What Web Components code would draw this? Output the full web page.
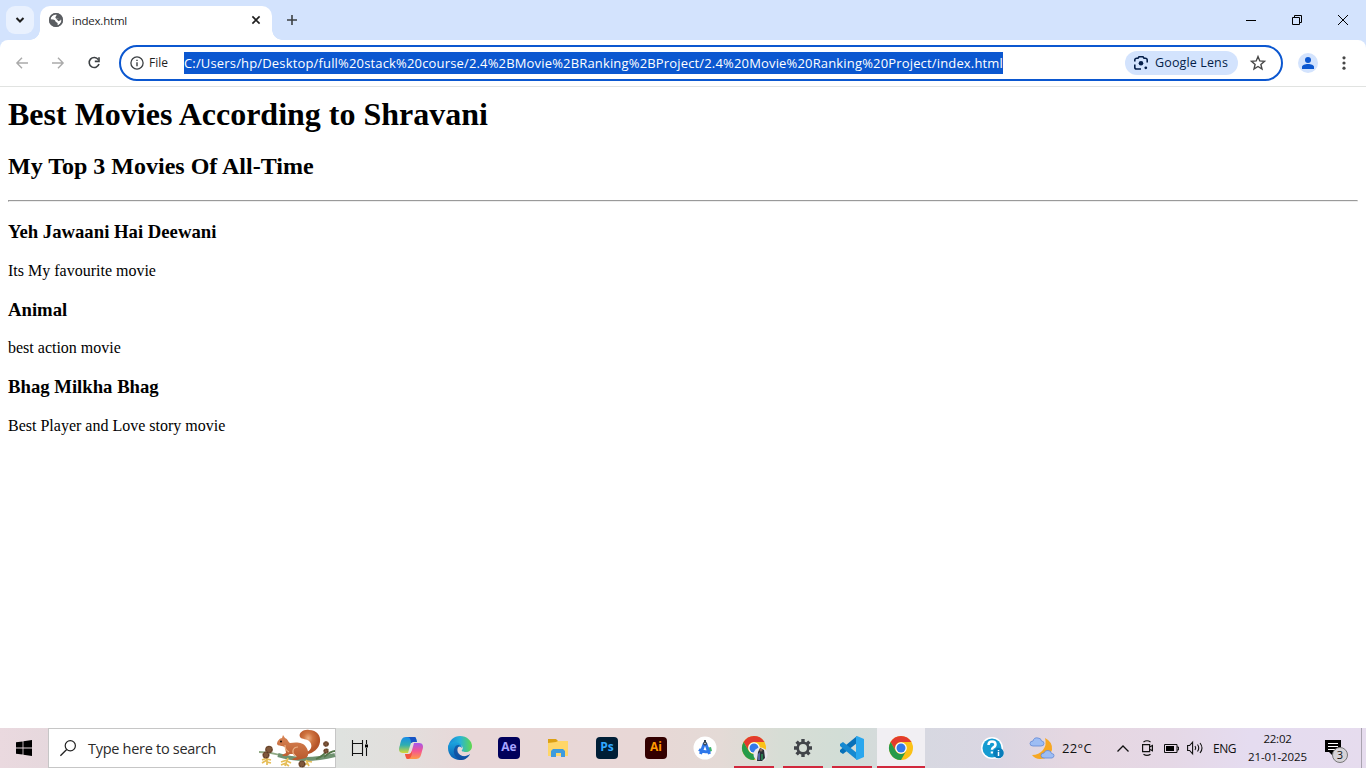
<!DOCTYPE html>
<html lang="en"><head><meta charset="utf-8"><title>index.html</title>
<style>html,body{margin:0;height:100%;overflow:hidden;background:#fff}</style></head>
<body><desktop-screen></desktop-screen>
<script>
const define=(name,css,html)=>customElements.define(name,class extends HTMLElement{
  constructor(){super();this.attachShadow({mode:'open'}).innerHTML=`<style>*{box-sizing:border-box}svg{display:block;flex:none;overflow:visible}${css}</style>${html}`}
});

// Label whose tracking adapts to the width it is given
customElements.define('ui-label',class extends HTMLElement{
  constructor(){super();this.attachShadow({mode:'open'}).innerHTML=`<style>:host{display:block;flex:none;white-space:pre}span{display:inline-block}</style><span><slot></slot></span>`}
  connectedCallback(){
    const w=+this.getAttribute('w'),s=this.shadowRoot.querySelector('span');
    this.style.width=w+'px';
    const n=this.textContent.length,r=s.getBoundingClientRect().width;
    if(r)s.style.letterSpacing=((w-r)/n)+'px';
  }
});

define('tab-strip',`
:host{display:flex;height:40px;background:#d3e3fd;padding-left:6px;font:12px/16px "Open Sans",sans-serif;color:#1f1f1f}
.find{width:28px;height:28px;margin-top:6px;border-radius:9px;background:#e9f1fe;display:grid;place-items:center}
.tab{position:relative;width:232px;height:34px;margin:6px 0 0 6px;background:#fff;border-radius:10px 10px 0 0;display:flex;align-items:center;padding:0 9px 6px 8px}
.tab:before,.tab:after{content:"";position:absolute;bottom:0;width:10px;height:10px}
.tab:before{left:-10px;background:radial-gradient(circle at 0 0,transparent 9.5px,#fff 10px)}
.tab:after{right:-10px;background:radial-gradient(circle at 100% 0,transparent 9.5px,#fff 10px)}
.tab ui-label{margin-left:8px;margin-right:auto;font-size:11.5px;margin-top:1px}
.plus{width:40px;display:grid;place-items:center}
.win{margin-left:auto;display:flex}.win div{width:46px;display:grid;place-items:center}`,
`<div class="find"><svg width="10" height="8" viewBox="0 0 10 8"><path d="M1.5 2L5 5.5 8.5 2" fill="none" stroke="#1f1f1f" stroke-width="2"/></svg></div>
<div class="tab"><svg width="16" height="16" viewBox="0 0 16 16"><circle cx="8" cy="8" r="7" fill="#5b5e62"/><path d="M8.700 2.200C8.800 4 7.500 4.200 7.400 5.600 7.300 6.600 8.600 7 9.600 6.600c1.200-.4 1.300 1 2.600 1.100 1 .1 1.300-.4 1.400.6-.3 2.300-1.600 4.200-3.800 5.200-.5-1 .2-1.700-.3-2.600-.5-.8-1.900-.5-2.100-1.600-.2-1-1.200-1.600-2.300-1.700L2.400 7.300C2.700 4.500 5 2 8.700 2.200z" fill="#fff"/><path d="M8 6.500h3l2 1.500-2.500 1.200z" fill="#5b5e62"/><circle cx="8" cy="8" r="6.300" fill="none" stroke="#5b5e62" stroke-width="1.500"/></svg><ui-label w="55">index.html</ui-label>
<svg width="14" height="14" viewBox="0 0 14 14"><path d="M3.4 3.4l7.2 7.2m0-7.2l-7.2 7.2" stroke="#1f1f1f" stroke-width="1.6"/></svg></div>
<div class="plus"><svg width="12" height="12"><path d="M6 1v10M1 6h10" stroke="#3c4043" stroke-width="1.6"/></svg></div>
<div class="win"><div><svg width="10" height="10"><path d="M0 5.5h10" stroke="#000"/></svg></div><div><svg width="10" height="10"><path d="M.5 2.5h7v7h-7zM2.5 2.5v-2h7v7h-2" fill="none" stroke="#000"/></svg></div><div><svg width="10" height="10"><path d="M0 0l10 10m0-10L0 10" stroke="#000"/></svg></div></div>`);

define('address-bar',`
:host{display:flex;align-items:center;height:47px;border-bottom:1px solid #e1e3e1;background:linear-gradient(#d3e3fd,#d3e3fd) 0 0/100% 10px no-repeat;font:12.5px/22px "Open Sans",sans-serif}
.back{flex:1;display:flex;align-items:center;height:46px;background:#fff;border-radius:8px 8px 0 0}
.nav{width:36px;display:grid;place-items:center}.nav:first-child{margin-left:4px}
.box{margin-left:7px;width:1164px;height:36px;border:2px solid #0b57d0;border-radius:18px;display:flex;align-items:center;padding:0 15px 0 9px;color:#1f1f1f}
.file{margin-left:5px;font-size:12px}
.url{margin-left:16px;background:#0b57d0;color:#fff;height:22px;font-size:13px;line-height:22px}
.chip{margin-left:auto;width:113px;height:24px;border-radius:12px;background:#d3e3fd;color:#041e49;display:flex;align-items:center;padding-left:8px}
.chip ui-label{margin-left:6px}.star{margin-left:12px}
.me{margin-left:15px;width:20px;height:20px;border-radius:50%;background:#d3e3fd;display:grid;place-items:center}
.dots{margin-left:24px}`,
`<div class="back"><div class="nav"><svg width="12" height="12"><path d="M12 6H1M6 .8L.9 6 6 11.2" fill="none" stroke="#aaa" stroke-width="1.4"/></svg></div>
<div class="nav"><svg width="12" height="12"><path d="M0 6h11M6 .8L11.1 6 6 11.2" fill="none" stroke="#aaa" stroke-width="1.4"/></svg></div>
<div class="nav"><svg width="14" height="14"><path d="M11.3 3.6A5 5 0 1 0 12 8" fill="none" stroke="#3c4043" stroke-width="1.6"/><path d="M12 1.200v4.200H7.800" fill="none" stroke="#3c4043" stroke-width="1.6"/></svg></div>
<div class="box"><svg width="14" height="14"><circle cx="7" cy="7" r="6.1" fill="none" stroke="#3c4043" stroke-width="1.3"/><path d="M7 6.2v4M7 3.7v1.4" stroke="#3c4043" stroke-width="1.4"/></svg>
<ui-label class="file" w="19">File</ui-label><ui-label class="url" w="819">C:/Users/hp/Desktop/full%20stack%20course/2.4%2BMovie%2BRanking%2BProject/2.4%20Movie%20Ranking%20Project/index.html</ui-label>
<div class="chip"><svg width="16" height="16"><path d="M1.800 6.500V5A1.800 1.800 0 0 1 3.600 3.200H5l1-1.400h4l1 1.400h1.400A1.800 1.800 0 0 1 14.200 5V7.500M1.800 9.500v2.700A1.800 1.800 0 0 0 3.600 14H8" fill="none" stroke="#041e49" stroke-width="1.6"/><circle cx="8" cy="8.300" r="2.300" fill="#041e49"/><circle cx="12.800" cy="12.800" r="1.400" fill="#041e49"/></svg><ui-label w="73">Google Lens</ui-label></div>
<svg class="star" width="16" height="16" viewBox="0 0 16 16"><path d="M8 1.6l1.8 4.3 4.7.4-3.6 3.1 1.1 4.6L8 11.5 4 14l1.1-4.6-3.6-3.1 4.7-.4z" fill="none" stroke="#474747" stroke-width="1.4"/></svg></div>
<div class="me"><svg width="12" height="12"><circle cx="6" cy="3" r="3" fill="#0b57d0"/><path d="M0 12v-2c0-2 3-3 6-3s6 1 6 3v2z" fill="#0b57d0"/></svg></div>
<svg class="dots" width="4" height="16"><circle cx="2" cy="2.8" r="1.600" fill="#474747"/><circle cx="2" cy="8" r="1.600" fill="#474747"/><circle cx="2" cy="13.2" r="1.600" fill="#474747"/></svg></div>`);

define('movie-entry',`:host{display:block}h3{font-size:18.72px;line-height:22px;margin:18.72px 0}p{font-size:16px;line-height:18px;margin:0}`,
`<h3><ui-label w="0"></ui-label><slot name="title"></slot></h3><p><slot></slot></p>`.replace('<ui-label w="0"></ui-label>',''));
define('movie-page',`:host{display:block;flex:1;padding:9px 8px 0;font-family:"Liberation Serif",serif;color:#000}
h1{font-size:32px;line-height:37px;margin:0 0 20.44px}h2{font-size:24px;line-height:27px;margin:0 0 19.92px}hr{margin:0;border:1px inset;color:gray}`,
`<h1>Best Movies According to Shravani</h1><h2>My Top 3 Movies Of All-Time</h2><hr>
<movie-entry><span slot="title">Yeh Jawaani Hai Deewani</span>Its My favourite movie</movie-entry>
<movie-entry><span slot="title">Animal</span>best action movie</movie-entry>
<movie-entry><span slot="title">Bhag Milkha Bhag</span>Best Player and Love story movie</movie-entry>`);

define('task-button',`:host{position:relative;display:grid;place-items:center;width:48px;height:40px;margin-right:1px;flex:none}
:host([running])::after{content:"";position:absolute;left:4px;right:4px;bottom:0;height:2px;background:#d1283d}
:host([active]){background:#f1eff3;margin-right:0}:host([active])::after{left:0;right:0}`,`<slot></slot>`);

const chrome=`<circle cx="12" cy="12" r="12" fill="#fbc116"/><path d="M1.6 6A12 12 0 0 1 22.4 6H12a6 6 0 0 0-5.2 9z" fill="#e33b2e"/><path d="M1.6 6A12 12 0 0 0 12 24l5.2-9A6 6 0 0 1 6.8 15z" fill="#269b4a"/><circle cx="12" cy="12" r="5.8" fill="#fff"/><circle cx="12" cy="12" r="4.5" fill="#3479e8"/>`;
const adobe=(t,bg,fg)=>`<div class="adobe" style="background:${bg};color:${fg}">${t}</div>`;

define('task-bar',`
:host{display:flex;height:40px;flex:none;font-family:"Open Sans",sans-serif;color:#111;
background:linear-gradient(90deg,#ead9df 0,#e6d8dd 48px,#dfe2df 340px,#e2dfdd 400px,#e8d7d8 470px,#e8d7d6 640px,#e4dad6 720px,#d7ddd5 780px,#d2ddd6 840px,#d7d8e1 925px,#dad6e2 990px,#e6d7e1 1080px,#e5d8e6 1170px,#e5dcf0 1250px,#e6dcee 1366px)}
.start{width:48px;display:grid;place-items:center}
.search{width:288px;background:#fff;border:1px solid #c6c6c6;display:flex;align-items:center;padding-left:11px;font-size:14.5px;color:#2b2b2b}
.search ui-label{margin-left:12px;margin-right:auto}
.view{width:51px;padding-right:3px;display:grid;place-items:center}
.adobe{width:22px;height:22px;border-radius:4px;font:bold 12px/20px "Open Sans",sans-serif;text-align:center}
.tray{margin-left:auto;display:flex;align-items:center;font-size:12px}
.clock{width:82px;display:grid;justify-items:center;font-size:11.5px;line-height:18px}
.note{position:relative;width:28px}.note b{position:absolute;left:7px;top:7px;width:16px;height:16px;border:1px solid #777;border-radius:50%;background:#d6d3d8;font:11px/14px "Open Sans",sans-serif;text-align:center}
.edge{width:5px;height:40px;border-left:1px solid #a9a3af}`,
`<div class="start"><svg width="16" height="16"><path d="M0 2.3L6.6 1.4v6.1H0zM7.4 1.2L16 0v7.5H7.4zM0 8.4h6.6v6.2L0 13.7zM7.4 8.4H16V16l-8.6-1.2z"/></svg></div>
<div class="search"><svg width="16" height="16"><circle cx="10.3" cy="5.7" r="5.1" fill="none" stroke="#222" stroke-width="1.2"/><path d="M6.7 9.5L.4 15.8" stroke="#222" stroke-width="1.3"/></svg><ui-label w="128">Type here to search</ui-label>
<svg width="77" height="38" viewBox="0 0 77 38"><defs><linearGradient id="s" x2="0" y2="1"><stop stop-color="#d98656"/><stop offset="1" stop-color="#b8592c"/></linearGradient><radialGradient id="t" cx=".42" cy=".35"><stop stop-color="#edb186"/><stop offset=".45" stop-color="#cf7440"/><stop offset="1" stop-color="#b65529"/></radialGradient></defs>
<path d="M1 23Q12 23 22 26" fill="none" stroke="#91aa85" stroke-width="1.800"/>
<path d="M20 26Q46 34 77 26" fill="none" stroke="#6f9270" stroke-width="4"/><path d="M58 30Q66 27 70 20M66 28Q73 22 77 22" fill="none" stroke="#55774a" stroke-width="1.800"/>
<path d="M9 28v8m0-7l-5 2m5 0l-5 3m5-4l4 1m-4 2l4 1M30 29l-3 8m2-6l-6 2m5 1l-5 2m6-4l4 2m-5 1l3 2M48 31l3 6m-1-3l-4 2m3-4l5 1" fill="none" stroke="#e5bd57" stroke-width="1.700"/>
<path d="M47 24c6-2 8-7 5-11-3-4-8-2-10-5-2-4 4-8 9-7 8 0 12 6 11 12-1 7-7 11-12 12z" fill="url(#t)"/>
<path d="M19 15c0-3 3-6 5-6l1-3 2 3c3 1 3 4 5 5 6-1 13-1 16 4 3 4 3 9 0 11l-9 2H35l-1-1 5-2-3-3-4 0-3 2h-4l-1-1 4-2-1-6-3-1c-2 0-5-1-5-2z" fill="url(#s)"/><path d="M40 18c-5 0-7 5-3 9M27 16c0 4 1 5 4 7" stroke="#eab083" stroke-width="1.200" fill="none"/><circle cx="23" cy="12.500" r=".9"/>
<g fill="#80583b"><circle cx="8" cy="26" r="3.500"/><circle cx="11" cy="20.500" r="3.800"/><circle cx="44" cy="35" r="3.500"/><circle cx="68" cy="15" r="2.800"/><circle cx="68" cy="22" r="2.600"/></g><g fill="none" stroke="#4b3120" stroke-width="1" stroke-dasharray="1.300 1.300"><circle cx="8" cy="26" r="2.700"/><circle cx="11" cy="20.500" r="3"/><circle cx="44" cy="35" r="2.700"/><circle cx="68" cy="15" r="2"/><circle cx="68" cy="22" r="1.800"/></g></svg></div>
<div class="view"><svg width="16" height="16"><path d="M.5 0v3.500h10V0M.5 16v-2.500h10V16M.5 3.500v10M10.500 3.500v10M14.500 0v4m0 4v8" fill="none" stroke="#111" stroke-width="1.100"/><path d="M13 4.500h3v3h-3z"/></svg></div>
<task-button><svg width="24" height="22" viewBox="0 0 24 22"><defs><linearGradient id="a" x2="0" y2="1"><stop stop-color="#188ce9"/><stop offset=".5" stop-color="#2faeb0"/><stop offset="1" stop-color="#d6d835"/></linearGradient><linearGradient id="b" x2="0" y2="1"><stop stop-color="#a457ed"/><stop offset=".5" stop-color="#f45691"/><stop offset="1" stop-color="#ff9b45"/></linearGradient></defs><path d="M7 0h8c2 0 2 1 3 5h-4c-2 0-2 1-3 4l-2 7H4c-4 0-5-3-3-8 1-5 2-8 6-8z" fill="url(#a)"/><path d="M8 0h7c2 0 2 1 3 5h-4l-2 1c0-3-1-6-4-6z" fill="#1754c5"/><path d="M17 22H9c-2 0-2-1-3-5h4c2 0 2-1 3-4l2-7h5c4 0 5 3 3 8-1 5-2 8-6 8z" fill="url(#b)"/><path d="M6 17h4c1 0 2-1 3-3 0 4-1 8-4 8-2 0-2-2-3-5z" fill="#f2543f"/></svg></task-button>
<task-button><svg width="24" height="24" viewBox="0 0 24 24"><defs><linearGradient id="c"><stop stop-color="#1686d8"/><stop offset=".5" stop-color="#28b3d8"/><stop offset="1" stop-color="#60d84c"/></linearGradient><linearGradient id="d" x2="0" y2="1"><stop stop-color="#1ba5df"/><stop offset="1" stop-color="#0b5bb0"/></linearGradient></defs><path d="M0 12C1 4 6 0 12 0c7 0 12 5 12 10 0 4-3 6-6 6-3 0-5-1-4-2 2-2 0-5-3-5-4-2-8-1-11 3z" fill="url(#c)"/><path d="M0 12c0-4 3-6 6-6 5 0 8 3 8 6-3-3-6 0-5 3 1 5 8 7 13 3-3 5-6 6-10 6C5 24 0 19 0 12z" fill="url(#d)"/><path d="M7 11c1-2 3-2 5-2-4 3-3 9 2 11 3 1 6 0 8-2-2 4-6 6-10 6-5-2-8-8-5-13z" fill="#134b9c" opacity=".75"/></svg></task-button>
<task-button>${adobe('Ae','#00005b','#a7a4ff')}</task-button>
<task-button><svg width="22" height="19"><path d="M1 0h8l2 2h10v6H1z" fill="#dca013"/><path d="M1 4l8-1 2-1h10v15H1z" fill="#ffd668"/><path d="M4 18v-6l2-2h10l2 2v6h-4v-4H9v4z" fill="#3e9bdd"/></svg></task-button>
<task-button>${adobe('Ps','#001e36','#31a8ff')}</task-button><task-button>${adobe('Ai','#330000','#ff9a00')}</task-button>
<task-button><svg width="22" height="22"><circle cx="11" cy="11" r="11.500" fill="#fff"/><path d="M12 11l5-1 1 4-4 1z" fill="#3cb56a"/><path d="M10.300 6.500L6.500 17M11.700 6.500L15.500 17M5 12.500q6 4 11 1" fill="none" stroke="#2f78ea" stroke-width="3"/><circle cx="11" cy="6.500" r="2" fill="#345"/><circle cx="11" cy="6.500" r=".7" fill="#fff"/><path d="M11 3v2" stroke="#345" stroke-width="2"/></svg></task-button>
<task-button running><svg width="24" height="24">${chrome}<circle cx="18.5" cy="18.5" r="7" fill="#e8e6ed"/><path d="M15 25l1-9 2-4 4 2 1 8-3 3z" fill="#292f36"/><path d="M16 18l2-2v8h-2z" fill="#5366a6"/><path d="M19 18h2v6h-2z" fill="#28794e"/><circle cx="19" cy="14" r="1.500" fill="#806661"/></svg></task-button>
<task-button running><svg width="18" height="18"><circle cx="9" cy="9" r="5.300" fill="none" stroke="#414449" stroke-width="2.600"/><g stroke="#414449" stroke-width="3.400"><path d="M9 0v3.500M9 14.500V18M0 9h3.500M14.500 9H18M2.600 2.600l2.500 2.500M12.900 12.900l2.500 2.500M15.400 2.600l-2.500 2.500M5.100 12.900l-2.500 2.500"/></g></svg></task-button>
<task-button running><svg width="24" height="24"><path d="M17 0v7L3 18l-3-2v-2z" fill="#0870b8"/><path d="M0 8l3-2 14 11v7L0 10z" fill="#1689d1"/><path d="M17 0l7 3v18l-7 3-1-1V1z" fill="#2aa7ee"/></svg></task-button>
<task-button running active><svg width="24" height="24">${chrome}</svg></task-button>
<div class="tray"><svg width="24" height="22"><circle cx="11" cy="11" r="11" fill="#fff"/><circle cx="17" cy="16" r="6" fill="#fff"/><circle cx="11" cy="11" r="9.500" fill="#159bd1"/><path d="M7.500 8q0-3.500 3.500-3.500t3.500 3q0 2-2.500 3.200-1 .6-1 2M11 14.500v2" fill="none" stroke="#fff" stroke-width="2.500"/><circle cx="17.500" cy="16" r="5.300" fill="#087dba"/><path d="M17.500 15v4m0-6v1.300" stroke="#fff" stroke-width="1.500"/></svg>
<svg style="margin-left:25px" width="24" height="23"><path d="M15 1q8 4 7 12-3 9-12 9-5 0-8-4 7 0 11-5 4-5 2-12" fill="#f6a723"/><g fill="#9dbdf4" stroke="#6389d4" stroke-width=".8"><path d="M3 9Q0 9 0 6.500 0 4 3 4q1-4 5-3 3 0 3.500 3Q14 4 14 6.500T11 9z"/><path d="M14 21q-3 0-3-2.500t3-2.500q1-3 4-2.500 3 0 3.500 3 2.500 0 2.500 2t-2 2.500z"/></g></svg>
<ui-label w="30" style="margin-left:8px;font-size:13px">22°C</ui-label>
<svg style="margin-left:25px" width="12" height="7"><path d="M.5 6.500L6 1l5.500 5.500" fill="none" stroke="#111" stroke-width="1.300"/></svg>
<svg style="margin-left:12px" width="14" height="16"><path d="M1.600 4.600h7v7h-7zM8.600 7l2.800-1.500v5.200L8.600 9.200M2.500 2q3.500-2.500 7 0M2.500 14.200q3.500 2.500 7 0" fill="none" stroke="#111" stroke-width="1.200"/></svg>
<svg style="margin-left:9px" width="16" height="9"><path d="M.5.500h12.500v8H.5zM13 3h1.500v3H13" fill="none" stroke="#111"/><path d="M2 2h8v5H2z"/></svg>
<svg style="margin-left:7px" width="18" height="14"><path d="M.6 4.500h2l3-3.300v11.600l-3-3.300h-2zM8 5q1.500 2 0 4M10.500 3.500q2.500 3.500 0 7M13 2q4 5 0 10" fill="none" stroke="#111" stroke-width="1.100"/></svg>
<ui-label w="23" style="margin-left:8px">ENG</ui-label>
<div class="clock"><ui-label w="28">22:02</ui-label><ui-label w="59">21-01-2025</ui-label></div>
<div class="note" style="margin-left:7px"><svg width="16" height="16"><path d="M0 0h16v12H8v4l-4-4H0z"/><path d="M3 3.500h10M3 6.500h10M3 9.500h7" stroke="#fff" stroke-width="1.200"/></svg><b>3</b></div>
<div class="edge" style="margin-left:8px"></div></div>`.replace('class="clock"','class="clock" style="padding-left:1px"'));

define('desktop-screen',`:host{display:flex;flex-direction:column;width:1366px;height:768px;background:#fff}`,
`<tab-strip></tab-strip><address-bar></address-bar><movie-page></movie-page><task-bar></task-bar>`);
</script></body></html>
